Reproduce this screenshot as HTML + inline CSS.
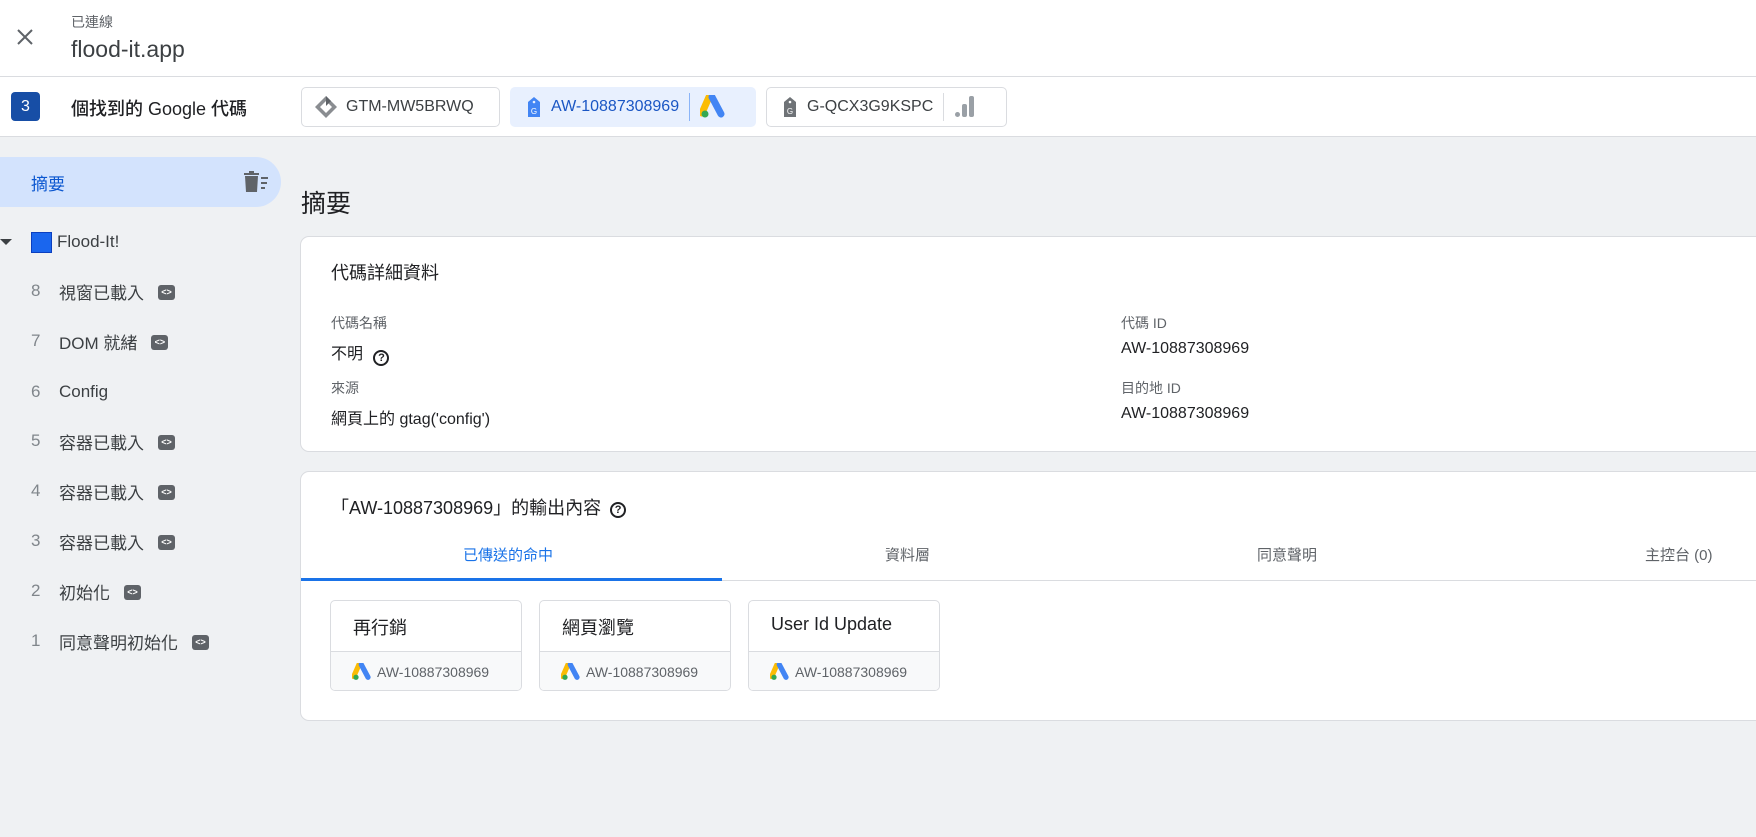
<!DOCTYPE html>
<html><head><meta charset="utf-8"><style>
*{box-sizing:border-box;margin:0;padding:0}
body{width:1756px;height:837px;overflow:hidden;background:#eff1f3;font-family:"Liberation Sans","Noto Sans CJK TC",sans-serif;color:#202124;position:relative}
.a{position:absolute;white-space:nowrap}
.hdr{position:absolute;left:0;top:0;width:1756px;height:137px;background:#fff}
.chip{position:absolute;top:87px;height:40px;border:1px solid #dadce0;border-radius:5px;background:#fff;display:flex;align-items:center;font-size:16px;color:#3c4043}
.card{position:absolute;left:300px;width:1470px;background:#fff;border:1px solid #dadce0;border-radius:9px}
.lbl{font-size:14px;color:#5f6368}
.val{font-size:16px;color:#202124}
.item{position:absolute;left:0;font-size:17px;color:#3c4043;display:flex;align-items:center;height:24px}
.item .n{width:59px;padding-left:31px;color:#80868b}
.ico{display:inline-block;width:17px;height:15px;background:#5f6368;border-radius:3px;margin-left:14px;margin-top:3px;color:#fff;font-size:9px;line-height:15px;text-align:center;font-weight:bold}
.hit{position:absolute;top:600px;width:192px;height:91px;border:1px solid #dadce0;border-radius:5px;background:#fff;overflow:hidden}
.hit .t{height:51px;padding:13px 0 0 22px;font-size:18px;color:#202124;border-bottom:1px solid #dadce0}
.hit .b{height:40px;background:#f8f9fa;display:flex;align-items:center;padding-left:21px;font-size:14px;color:#5f6368}
.tab{position:absolute;top:544px;font-size:15px;color:#5f6368}
</style></head><body>
<div class="hdr"></div>
<svg class="a" style="left:15px;top:27px" width="20" height="20" viewBox="0 0 20 20"><path d="M3 3L17 17M17 3L3 17" stroke="#5f6368" stroke-width="2"/></svg>
<div class="a" style="left:71px;top:12px;font-size:14px;color:#5f6368">已連線</div>
<div class="a" style="left:71px;top:36px;font-size:23px;color:#3c4043">flood-it.app</div>
<div class="a" style="left:0;top:76px;width:1756px;height:1px;background:#dadce0"></div>
<div class="a" style="left:11px;top:92px;width:29px;height:29px;background:#174ea6;border-radius:4px;color:#fff;font-size:16px;text-align:center;line-height:29px">3</div>
<div class="a" style="left:71px;top:95px;font-size:18px;color:#202124;font-weight:500">個找到的 Google 代碼</div>
<div class="chip" style="left:301px;width:199px"><svg style="margin:0 8px 0 12px" width="24" height="24" viewBox="0 0 24 24"><path d="M12 1L23 12L12 23L1 12Z" fill="#8a8d91"/><path d="M12 6L18 12L12 18L6 12Z" fill="#fff"/><path d="M12 1L17 6L12 11Z" fill="#5f6368"/></svg>GTM-MW5BRWQ</div>
<div class="chip" style="left:510px;width:246px;background:#e8f0fe;border-color:#e8f0fe;color:#1a56c4"><svg style="margin:0 10px 0 16px" width="14" height="22" viewBox="0 0 14 22"><path d="M7 1L13 6V21H1V6Z" fill="#4285f4"/><circle cx="7" cy="6" r="1.3" fill="#e8f0fe"/><text x="7" y="18" font-size="8" fill="#fff" text-anchor="middle" font-family="Liberation Sans">G</text></svg>AW-10887308969<span style="width:1px;height:28px;background:#8ab4f8;margin:0 10px"></span><svg width="26" height="24" viewBox="0 0 26 24"><path d="M9 2L2 18" stroke="#fbbc04" stroke-width="7" stroke-linecap="round"/><path d="M12 2L21 19" stroke="#4285f4" stroke-width="7" stroke-linecap="round"/><circle cx="5" cy="19" r="3.5" fill="#34a853"/></svg></div>
<div class="chip" style="left:766px;width:241px"><svg style="margin:0 10px 0 16px" width="14" height="22" viewBox="0 0 14 22"><path d="M7 1L13 6V21H1V6Z" fill="#6f7377"/><circle cx="7" cy="6" r="1.3" fill="#fff"/><text x="7" y="18" font-size="8" fill="#fff" text-anchor="middle" font-family="Liberation Sans">G</text></svg>G-QCX3G9KSPC<span style="width:1px;height:28px;background:#dadce0;margin:0 10px"></span><svg width="22" height="24" viewBox="0 0 22 24"><rect x="1" y="17" width="5" height="5" rx="2.5" fill="#9aa0a6"/><rect x="8" y="9" width="5" height="13" rx="2" fill="#9aa0a6"/><rect x="15" y="1" width="5" height="21" rx="2" fill="#9aa0a6"/></svg></div>
<div class="a" style="left:0;top:136px;width:1756px;height:1px;background:#dadce0"></div>

<div class="a" style="left:0;top:157px;width:281px;height:50px;background:#d3e3fd;border-radius:0 25px 25px 0"></div>
<div class="a" style="left:31px;top:170px;font-size:17px;color:#0b57d0">摘要</div>
<svg class="a" style="left:243px;top:171px" width="26" height="22" viewBox="0 0 26 22"><path d="M1 3H16M6 1H11" stroke="#5f6368" stroke-width="2"/><path d="M2 5H15L14 21H3Z" fill="#5f6368"/><path d="M18 7H25M18 12H24M18 17H22" stroke="#5f6368" stroke-width="2"/></svg>
<svg class="a" style="left:0;top:238px" width="12" height="8"><path d="M0 1H12L6 7Z" fill="#3c4043"/></svg>
<div class="a" style="left:31px;top:232px;width:21px;height:21px;background:#1a66ee;border:1px solid #0b3fbf"></div>
<div class="a" style="left:57px;top:232px;font-size:17px;color:#3c4043">Flood-It!</div>
<div class="item" style="top:279px"><span class="n">8</span>視窗已載入<span class="ico">&lt;&gt;</span></div>
<div class="item" style="top:329px"><span class="n">7</span>DOM 就緒<span class="ico">&lt;&gt;</span></div>
<div class="item" style="top:380px"><span class="n">6</span>Config</div>
<div class="item" style="top:429px"><span class="n">5</span>容器已載入<span class="ico">&lt;&gt;</span></div>
<div class="item" style="top:479px"><span class="n">4</span>容器已載入<span class="ico">&lt;&gt;</span></div>
<div class="item" style="top:529px"><span class="n">3</span>容器已載入<span class="ico">&lt;&gt;</span></div>
<div class="item" style="top:579px"><span class="n">2</span>初始化<span class="ico">&lt;&gt;</span></div>
<div class="item" style="top:629px"><span class="n">1</span>同意聲明初始化<span class="ico">&lt;&gt;</span></div>

<div class="a" style="left:301px;top:184px;font-size:25px;color:#202124">摘要</div>
<div class="card" style="top:236px;height:216px"></div>
<div class="a" style="left:331px;top:259px;font-size:18px">代碼詳細資料</div>
<div class="a lbl" style="left:331px;top:313px">代碼名稱</div>
<div class="a val" style="left:331px;top:340px">不明 <span style="display:inline-block;width:16px;height:16px;border:2px solid #202124;border-radius:50%;font-size:11px;text-align:center;line-height:12px;font-weight:bold;margin-left:6px;vertical-align:-2px">?</span></div>
<div class="a lbl" style="left:331px;top:378px">來源</div>
<div class="a val" style="left:331px;top:405px">網頁上的 gtag('config')</div>
<div class="a lbl" style="left:1121px;top:313px">代碼 ID</div>
<div class="a val" style="left:1121px;top:340px">AW-10887308969</div>
<div class="a lbl" style="left:1121px;top:378px">目的地 ID</div>
<div class="a val" style="left:1121px;top:405px">AW-10887308969</div>

<div class="card" style="top:471px;height:250px"></div>
<div class="a" style="left:331px;top:494px;font-size:18px">「AW-10887308969」的輸出內容 <span style="display:inline-block;width:16px;height:16px;border:2px solid #202124;border-radius:50%;font-size:11px;text-align:center;line-height:12px;font-weight:bold;margin-left:4px;vertical-align:1px">?</span></div>
<div class="tab" style="left:463px;color:#1a73e8">已傳送的命中</div>
<div class="tab" style="left:885px">資料層</div>
<div class="tab" style="left:1257px">同意聲明</div>
<div class="tab" style="left:1645px">主控台 (0)</div>
<div class="a" style="left:301px;top:580px;width:1455px;height:1px;background:#dadce0"></div>
<div class="a" style="left:301px;top:578px;width:421px;height:3px;background:#1a73e8"></div>
<div class="hit" style="left:330px"><div class="t">再行銷</div><div class="b"><svg width="20" height="18" viewBox="0 0 26 24" style="margin-right:5px"><path d="M9 2L2 18" stroke="#fbbc04" stroke-width="7" stroke-linecap="round"/><path d="M12 2L21 19" stroke="#4285f4" stroke-width="7" stroke-linecap="round"/><circle cx="5" cy="19" r="3.5" fill="#34a853"/></svg>AW-10887308969</div></div>
<div class="hit" style="left:539px"><div class="t">網頁瀏覽</div><div class="b"><svg width="20" height="18" viewBox="0 0 26 24" style="margin-right:5px"><path d="M9 2L2 18" stroke="#fbbc04" stroke-width="7" stroke-linecap="round"/><path d="M12 2L21 19" stroke="#4285f4" stroke-width="7" stroke-linecap="round"/><circle cx="5" cy="19" r="3.5" fill="#34a853"/></svg>AW-10887308969</div></div>
<div class="hit" style="left:748px"><div class="t">User Id Update</div><div class="b"><svg width="20" height="18" viewBox="0 0 26 24" style="margin-right:5px"><path d="M9 2L2 18" stroke="#fbbc04" stroke-width="7" stroke-linecap="round"/><path d="M12 2L21 19" stroke="#4285f4" stroke-width="7" stroke-linecap="round"/><circle cx="5" cy="19" r="3.5" fill="#34a853"/></svg>AW-10887308969</div></div>
</body></html>
